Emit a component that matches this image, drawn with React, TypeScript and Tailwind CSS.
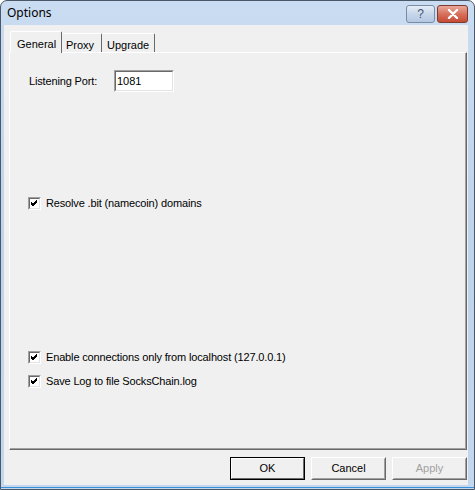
import React from "react";

const font = { fontFamily: '"Liberation Sans", Arial, sans-serif' };

function Check({ label }: { label: string }) {
  return (
    <div className="flex items-center h-[13px]">
      <div className="w-[13px] h-[13px] border border-t-[#a0a0a0] border-l-[#a0a0a0] border-b-white border-r-white">
        <div className="w-full h-full border border-t-[#696969] border-l-[#696969] border-b-[#e3e3e3] border-r-[#e3e3e3] bg-white flex items-center justify-center">
          <svg width="9" height="9" viewBox="0 0 9 9">
            <path d="M1 4 L3 6 L7 2 M1 5 L3 7 L7 3 M1 3 L3 5 L7 1" stroke="#000" strokeWidth="1" fill="none" />
          </svg>
        </div>
      </div>
      <span className="ml-[5px] text-[11px] tracking-[-0.15px] text-black leading-none">{label}</span>
    </div>
  );
}

function Btn({ label, def, disabled }: { label: string; def?: boolean; disabled?: boolean }) {
  return (
    <div
      className={
        "w-[75px] h-[23px] border " +
        (def ? "border-[#000]" : "border-t-white border-l-white border-b-[#696969] border-r-[#696969]")
      }
    >
      <div
        className={
          "w-full h-full flex items-center justify-center text-[11px] border " +
          (def
            ? "border-t-white border-l-white border-b-[#696969] border-r-[#696969]"
            : "border-t-[#f0f0f0] border-l-[#f0f0f0] border-b-[#a0a0a0] border-r-[#a0a0a0]") +
          (disabled ? " text-[#a0a0a0]" : " text-black")
        }
      >
        {label}
      </div>
    </div>
  );
}

export default function App() {
  return (
    <div className="w-[475px] h-[490px] bg-white" style={font}>
      <div className="w-full h-full flex flex-col rounded-t-[7px] border border-[#4b5868] bg-gradient-to-b from-[#c9dcf1] via-[#bed4ec] to-[#c3d8ee] overflow-hidden">
        <div className="h-[24px] flex items-center justify-between pl-[6px] pr-[6px] shrink-0">
          <span className="text-[12px] text-black" style={{ fontFamily: '"Noto Sans", "Liberation Sans", sans-serif' }}>Options</span>
          <div className="flex items-start self-start mt-[4px] gap-[2px]">
            <div className="w-[29px] h-[18px] rounded-[3px] border border-[#7a8ca4] bg-gradient-to-b from-[#e6eef8] via-[#c7d6ea] to-[#b4c8e2] flex items-center justify-center text-[12px] text-[#44556e]">
              ?
            </div>
            <div className="w-[31px] h-[18px] rounded-[3px] border border-[#7d3a2e] bg-gradient-to-b from-[#e9a89a] via-[#d7705c] to-[#c54a34] flex items-center justify-center">
              <svg width="12" height="10" viewBox="0 0 12 10">
                <path d="M2 1 L10 9 M10 1 L2 9" stroke="#fff" strokeWidth="2.4" strokeLinecap="round" />
              </svg>
            </div>
          </div>
        </div>
        <div className="flex-1 ml-[3px] mr-[6px] mb-[4px] bg-[#f0f0f0] flex flex-col">
          <div className="h-[27px] flex items-end pl-[6px] shrink-0">
            <div className="relative z-10 -mb-px h-[22px] w-[52px] bg-[#f0f0f0] border-t border-l border-t-white border-l-white border-r border-r-[#696969] rounded-t-[2px] flex items-start pt-[4px] pl-[6px] text-[11px]">
              General
            </div>
            <div className="h-[19px] w-[40px] border-t border-t-white border-r border-r-[#696969] rounded-t-[2px] flex items-start pt-[3px] pl-[4px] text-[11px]">
              Proxy
            </div>
            <div className="h-[19px] w-[53px] border-t border-t-white border-r border-r-[#696969] rounded-t-[2px] flex items-start pt-[3px] pl-[5px] text-[11px]">
              Upgrade
            </div>
          </div>
          <div className="ml-[5px] w-[458px] h-[398px] border border-t-white border-l-white border-b-[#696969] border-r-[#696969] shrink-0">
            <div className="w-full h-full border-b border-r border-b-[#a0a0a0] border-r-[#a0a0a0] flex flex-col pl-[18px]">
              <div className="flex items-center mt-[17px] h-[22px]">
                <span className="text-[11px] tracking-[-0.15px] w-[86px] pl-[1px]">Listening Port:</span>
                <div className="w-[60px] h-[22px] border border-t-[#a0a0a0] border-l-[#a0a0a0] border-b-white border-r-white">
                  <div className="w-full h-full border border-t-[#696969] border-l-[#696969] border-b-[#e3e3e3] border-r-[#e3e3e3] bg-white text-[11px] flex items-center pl-[1px]">
                    1081
                  </div>
                </div>
              </div>
              <div className="mt-[105px]">
                <Check label="Resolve .bit (namecoin) domains" />
              </div>
              <div className="mt-[141px]">
                <Check label="Enable connections only from localhost (127.0.0.1)" />
              </div>
              <div className="mt-[11px]">
                <Check label="Save Log to file SocksChain.log" />
              </div>
            </div>
          </div>
          <div className="flex justify-end gap-[6px] mt-[7px] mr-[0px] pr-[1px]">
            <Btn label="OK" def />
            <Btn label="Cancel" />
            <Btn label="Apply" disabled />
          </div>
        </div>
        <div className="h-[1px] bg-[#3a8fd6] -mt-[2px] mb-[1px]" />
      </div>
    </div>
  );
}
